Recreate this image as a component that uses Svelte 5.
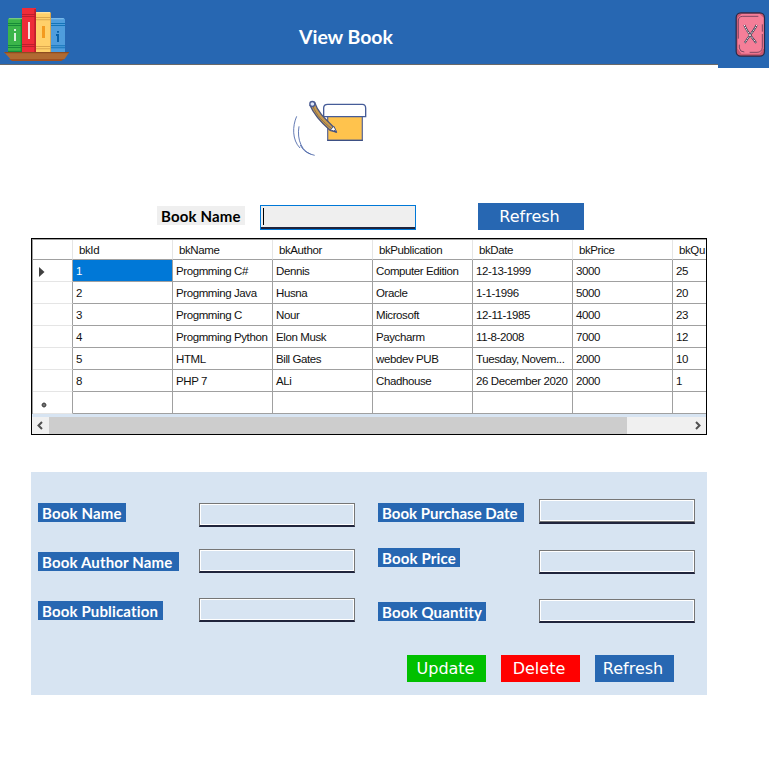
<script>
  const columns = ['bkId', 'bkName', 'bkAuthor', 'bkPublication', 'bkDate', 'bkPrice', 'bkQu'];
  const rows = [
    ['1', 'Progmming C#', 'Dennis', 'Computer Edition', '12-13-1999', '3000', '25'],
    ['2', 'Progmming Java', 'Husna', 'Oracle', '1-1-1996', '5000', '20'],
    ['3', 'Progmming C', 'Nour', 'Microsoft', '12-11-1985', '4000', '23'],
    ['4', 'Progmming Python', 'Elon Musk', 'Paycharm', '11-8-2008', '7000', '12'],
    ['5', 'HTML', 'Bill Gates', 'webdev PUB', 'Tuesday, Novem...', '2000', '10'],
    ['8', 'PHP 7', 'ALi', 'Chadhouse', '26 December 2020', '2000', '1'],
    ['', '', '', '', '', '', '']
  ];
</script>

<div class="window">
  <header>
    <svg class="logo" width="80" height="64" viewBox="0 0 240 192">
      <path fill="#3bb54a" d="M28 54h38v102H24V58z" /><path fill="#78c97f" d="M28 54h38v4H25z" />
      <path fill="#168b38" d="M62 58h4v98h-4zM24 69h42v3H24zM24 75h42v3H24zM24 135h42v3H24zM24 141h42v3H24zM24 152h42v4H24z" />
      <path fill="#d9f0dc" d="M42 87h6v6h-6zM42 99h6v24h-6z" />
      <path fill="#ee2c39" d="M66 24h42v132H66z" />
      <path fill="#bd1f2d" d="M103 27h5v129h-5zM66 42h42v3H66zM66 48h42v3H66zM66 132h42v3H66zM66 138h42v3H66z" />
      <path fill="#f7dfe1" d="M84 66h6v51h-6z" />
      <path fill="#ffd06a" d="M108 36h42l3 4v116h-45z" />
      <path fill="#ffe3a0" d="M109 36h41v4h-41z" />
      <path fill="#dba74e" d="M150 39h3v117h-3zM108 51h45v3h-45zM108 58h45v3h-45zM108 138h45v3h-45zM108 145h45v3h-45z" />
      <path fill="#f39a1f" d="M126 78h9v36h-9z" />
      <path fill="#4f9ddc" d="M153 54h38l4 4v98h-42z" /><path fill="#78b8e8" d="M153 54h38v4h-38z" />
      <path fill="#1474b8" d="M153 69h42v3h-42zM153 75h42v3h-42zM153 136h42v3h-42zM153 142h42v3h-42z" />
      <path fill="#0760a8" d="M171 93h6v5h-6zM168 102h9v24h-6v-18h-3z" />
      <path fill="#b06a32" d="M12 156h196l-14 21H31z" /><path fill="#8e4c20" d="M12 156h196l-3 4H16z" /><path fill="#a05020" d="M25 177h168l-9 6H37z" />
    </svg>
    <h1>View Book</h1>
    <div class="corner">
      <svg width="51" height="68" viewBox="54 0 153 204">
        <rect x="108.500" y="38.500" width="85" height="130" rx="14" fill="#c95870" stroke="#2a2946" stroke-width="3.500" />
        <path fill="#f57e98" d="M125 42h54l12 11v92l-12 16h-55l-11-15V54z" />
        <path fill="none" stroke="#693b55" stroke-width="2.500" d="M115 116V63q0-14 13-14h47M118 134v10q2 12 15 12M187 73v22M187 102v41q-2 14-16 14h-22" />
        <path fill="none" stroke="#39354b" stroke-width="6" d="M133 75c7 19 21 35 36 54M170 75c-9 19-23 32-36 54" />
        <path fill="none" stroke="#fff" stroke-width="3" stroke-dasharray="4 2" d="M133 75c7 19 21 35 36 54M170 75c-9 19-23 32-36 54" />
      </svg>
    </div>
  </header>

  <svg class="art" width="100" height="75" viewBox="0 0 300 225">
    <path fill="#ffc34d" stroke="#66719a" stroke-width="4" d="M143 78h104v73H143z" />
    <path stroke="#3d5084" stroke-width="4" d="M142 151h106" />
    <path fill="#fff" stroke="#465c98" stroke-width="4" d="M131 80V54q0-11 12-11h104q10 0 10 12v25z" />
    <path fill="#c99a50" stroke="#4b557e" stroke-width="4" stroke-linejoin="round" d="M90 46l14-9c10 31 31 49 56 73l9 16-19-5C124 98 103 77 90 46z" />
    <path fill="none" stroke="#8d7448" stroke-width="3" d="M98 47c12 31 33 50 56 68" />
    <path fill="#fff" stroke="#4b557e" stroke-width="3" d="M151 119l11-10 8 18z" /><path fill="#334575" d="M163 119l7 8-9-3z" />
    <circle cx="97" cy="42" r="7.500" fill="#dfe7fa" stroke="#4b5c93" stroke-width="4" />
    <path fill="none" stroke="#4560a5" stroke-width="2.500" d="M50 79c-13 29-14 71 10 95M57 109c-7 39 8 81 47 87M61 165c7 14 15 22 31 27" />
  </svg>

  <div class="search">
    <span class="label plain">Book Name</span>
    <div class="field focus"><i></i></div>
    <button class="refresh">Refresh</button>
  </div>

  <section class="datagrid">
    <div class="line head">
      <span class="stub"></span>
      {#each columns as c}<span>{c}</span>{/each}
    </div>
    {#each rows as row, r}
      <div class="line">
        <span class="stub">
          {#if r === 0}
            <svg class="arrow" width="6" height="10" viewBox="0 0 6 10"><path fill="#404040" d="M0 0l5.500 5L0 10z" /></svg>
          {:else if r === 6}
            <svg class="star" width="6" height="6" viewBox="0 0 6 6"><circle cx="3" cy="3" r="2.200" fill="#333" /><path stroke="#777" stroke-width=".8" d="M3 0v6M0 3h6M1 1l4 4M5 1L1 5" /></svg>
          {/if}
        </span>
        {#each row as cell, c}<span class:selected={r === 0 && c === 0}>{cell}</span>{/each}
      </div>
    {/each}
    <div class="scroll">
      <svg width="17" height="17" viewBox="0 0 17 17"><path fill="none" stroke="#505050" stroke-width="2" d="M10 5L6.500 8.500 10 12" /></svg>
      <div class="thumb"></div>
      <svg width="17" height="17" viewBox="0 0 17 17"><path fill="none" stroke="#505050" stroke-width="2" d="M7 5l3.500 3.500L7 12" /></svg>
    </div>
  </section>

  <section class="form">
    <div class="columns">
      <div class="labels left">
        <span class="label name">Book Name</span>
        <span class="label author">Book Author Name</span>
        <span class="label publication">Book Publication</span>
      </div>
      <div class="fields left">
        <div class="field"></div><div class="field"></div><div class="field"></div>
      </div>
      <div class="labels right">
        <span class="label date">Book Purchase Date</span>
        <span class="label price">Book Price</span>
        <span class="label quantity">Book Quantity</span>
      </div>
      <div class="fields right">
        <div class="field tall"></div><div class="field"></div><div class="field"></div>
      </div>
    </div>
    <div class="actions">
      <button class="update">Update</button>
      <button class="delete">Delete</button>
      <button>Refresh</button>
    </div>
  </section>
</div>

<style>
  :global(body) { margin: 0; background: #fff; }
  .window { width: 769px; height: 758px; overflow: hidden; background: #fff; }
  .window, .window * { box-sizing: border-box; }
  svg { display: block; flex: none; }

  header { display: flex; height: 68px; }
  .logo { height: 65px; background: #2767b2; border-bottom: 1px solid #696969; }
  h1 { flex: 1; height: 65px; margin: 0; padding-left: 219px; background: #2767b2; border-bottom: 1px solid #696969; color: #fff; font: 700 19.5px/74px Lato, sans-serif; letter-spacing: -.05px; white-space: nowrap; }
  .corner { width: 51px; height: 68px; background: #2767b2; }

  .art { margin: 22px 0 0 280px; }

  .search { display: flex; margin: 38px 0 0 157px; height: 35px; }
  .label { display: block; height: 19px; padding-left: 4px; background: #2767b2; color: #fff; font: 700 15px/20px Lato, sans-serif; letter-spacing: .15px; white-space: nowrap; }
  .label.plain { width: 88px; margin: 3px 15px 0 0; background: #efefef; color: #000; }
  .field { width: 156px; height: 24px; border: 1px solid #767676; border-bottom: 2px solid #20243c; box-shadow: inset 0 0 0 1px #fff; background: #d7e4f2; }
  .field.tall { height: 25px; box-shadow: inset 0 -1px #767676, inset 0 -2px #fff, inset 0 0 0 1px #fff; }
  .field.focus { margin-top: 2px; height: 25px; border-color: #0078d7; background: #efefef; box-shadow: inset 0 -2px #20243c; border-bottom-width: 1px; padding: 2px; }
  .focus i { display: block; width: 1px; height: 17px; background: #000; }
  button { width: 79px; height: 27px; padding: 0 3px 0 0; border: 0; background: #2767b2; color: #fff; font: 16px/26px "DejaVu Sans", sans-serif; }
  .update { background: #00c000; padding-right: 2px; }
  .delete { background: #f00; }
  .refresh { width: 106px; margin-left: 62px; }

  .datagrid { width: 676px; height: 197px; margin-left: 31px; border: 1px solid #000; overflow: hidden; background: #d7e4f2; font: 11.5px/23px "Liberation Sans", sans-serif; letter-spacing: -.4px; color: #111; }
  .line { display: flex; height: 22px; width: 741px; background: #fff; border-left: 1px solid #a0a0a0; }
  .line span { width: 100px; flex: none; padding-left: 3px; border-right: 1px solid #a0a0a0; border-bottom: 1px solid #a0a0a0; white-space: nowrap; overflow: hidden; }
  .line .stub { display: flex; align-items: center; width: 40px; padding-left: 6px; border-bottom-color: #e5e5e5; }
  .head { height: 21px; border-top: 1px solid #a0a0a0; }
  .line.head span { padding-left: 6px; border-right-color: #e5e5e5; line-height: 21px; }
  .line.head .stub { border-bottom-color: #a0a0a0; }
  .line span.selected { background: #0078d7; color: #fff; }
  .arrow { margin-top: 2px; }
  .star { margin: 4px 0 0 2px; }
  .scroll { display: flex; height: 17px; margin-top: 3px; background: #f0f0f0; }
  .thumb { width: 578px; margin-right: 62px; background: #cdcdcd; }

  .form { width: 676px; height: 223px; margin: 37px 0 0 31px; background: #d7e4f2; }
  .columns { display: flex; height: 183px; padding-left: 7px; }
  .labels { display: flex; flex-direction: column; width: 161px; padding-top: 31px; gap: 30px; }
  .labels.right { margin-left: 23px; gap: 26px; }
  .name { width: 88px; }
  .author { width: 141px; }
  .publication { width: 125px; }
  .date { width: 146px; letter-spacing: 0; }
  .price { width: 82px; }
  .quantity { width: 108px; margin-top: 9px; }
  .fields { padding-top: 31px; }
  .fields .field + .field { margin-top: 22px; }
  .fields .field:last-child { margin-top: 25px; }
  .fields.right { padding-top: 27px; }
  .fields.right .field + .field { margin-top: 26px; }
  .fields.right .field:last-child { margin-top: 25px; }
  .actions { display: flex; gap: 15px; padding-left: 376px; }
</style>
